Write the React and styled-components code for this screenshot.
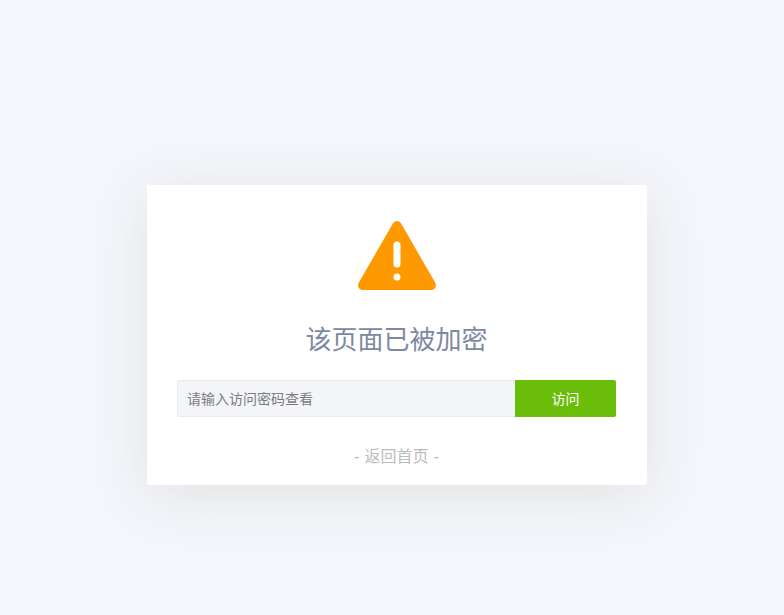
import { useState } from "react";
import styled, { createGlobalStyle } from "styled-components";

const GlobalStyle = createGlobalStyle`
  * {
    box-sizing: border-box;
  }

  body {
    margin: 0;
    background: #f4f6fb;
    font-family: "DejaVu Sans", "Noto Sans CJK SC", sans-serif;
  }
`;

const Page = styled.main`
  display: flex;
  justify-content: center;
  min-height: 100vh;
  padding: 185px 0 40px 10px;
`;

const Card = styled.section`
  display: flex;
  flex-direction: column;
  align-items: center;
  align-self: flex-start;
  width: 100%;
  max-width: 500px;
  padding: 36px 31px 16px 30px;
  border-radius: 2px;
  background: #ffffff;
  box-shadow: 0 10px 60px rgba(70, 60, 0, 0.1);
`;

const WarningIcon = styled.svg`
  display: block;
  width: 78px;
  height: 69px;
`;

const Title = styled.h1`
  margin: 30px 0 20px;
  color: #7e88a3;
  font-size: 26px;
  font-weight: 400;
  line-height: 40px;
`;

const Form = styled.form`
  display: flex;
  width: 100%;
  height: 37px;
`;

const PasswordInput = styled.input`
  flex: 1;
  min-width: 0;
  padding: 0 9px;
  border: 1px solid #e9ebee;
  border-right: none;
  border-radius: 2px 0 0 2px;
  outline: none;
  background: #f3f5f9;
  color: #757575;
  font-family: inherit;
  font-size: 14px;

  &::placeholder {
    color: #7c7c7c;
  }
`;

const SubmitButton = styled.button`
  width: 101px;
  padding: 0 0 2px;
  border: none;
  border-radius: 0 2px 2px 0;
  background: #6abd09;
  color: #ffffff;
  cursor: pointer;
  font-family: inherit;
  font-size: 14px;
`;

const BackLink = styled.a`
  margin-top: 28px;
  color: #bbbbbb;
  font-size: 16px;
  line-height: 24px;
  text-decoration: none;
`;

export default function App() {
  const [password, setPassword] = useState("");

  return (
    <>
      <GlobalStyle />
      <Page>
        <Card>
          <WarningIcon viewBox="0 0 78 69" aria-hidden="true">
            <path
              d="M35 2.3Q39 -2.3 43 2.3L77.3 61.8Q79.5 68 73.5 69H4.5Q-1.5 68 0.7 61.8Z"
              fill="#ff9900"
            />
            <rect x="35.5" y="20.5" width="7" height="26" rx="3.5" fill="#fff" />
            <circle cx="39" cy="56" r="3.5" fill="#fff" />
          </WarningIcon>
          <Title>该页面已被加密</Title>
          <Form onSubmit={(e) => e.preventDefault()}>
            <PasswordInput
              type="password"
              aria-label="请输入访问密码查看"
              placeholder="请输入访问密码查看"
              value={password}
              onChange={(e) => setPassword(e.target.value)}
            />
            <SubmitButton type="submit">访问</SubmitButton>
          </Form>
          <BackLink href="/">- 返回首页 -</BackLink>
        </Card>
      </Page>
    </>
  );
}
